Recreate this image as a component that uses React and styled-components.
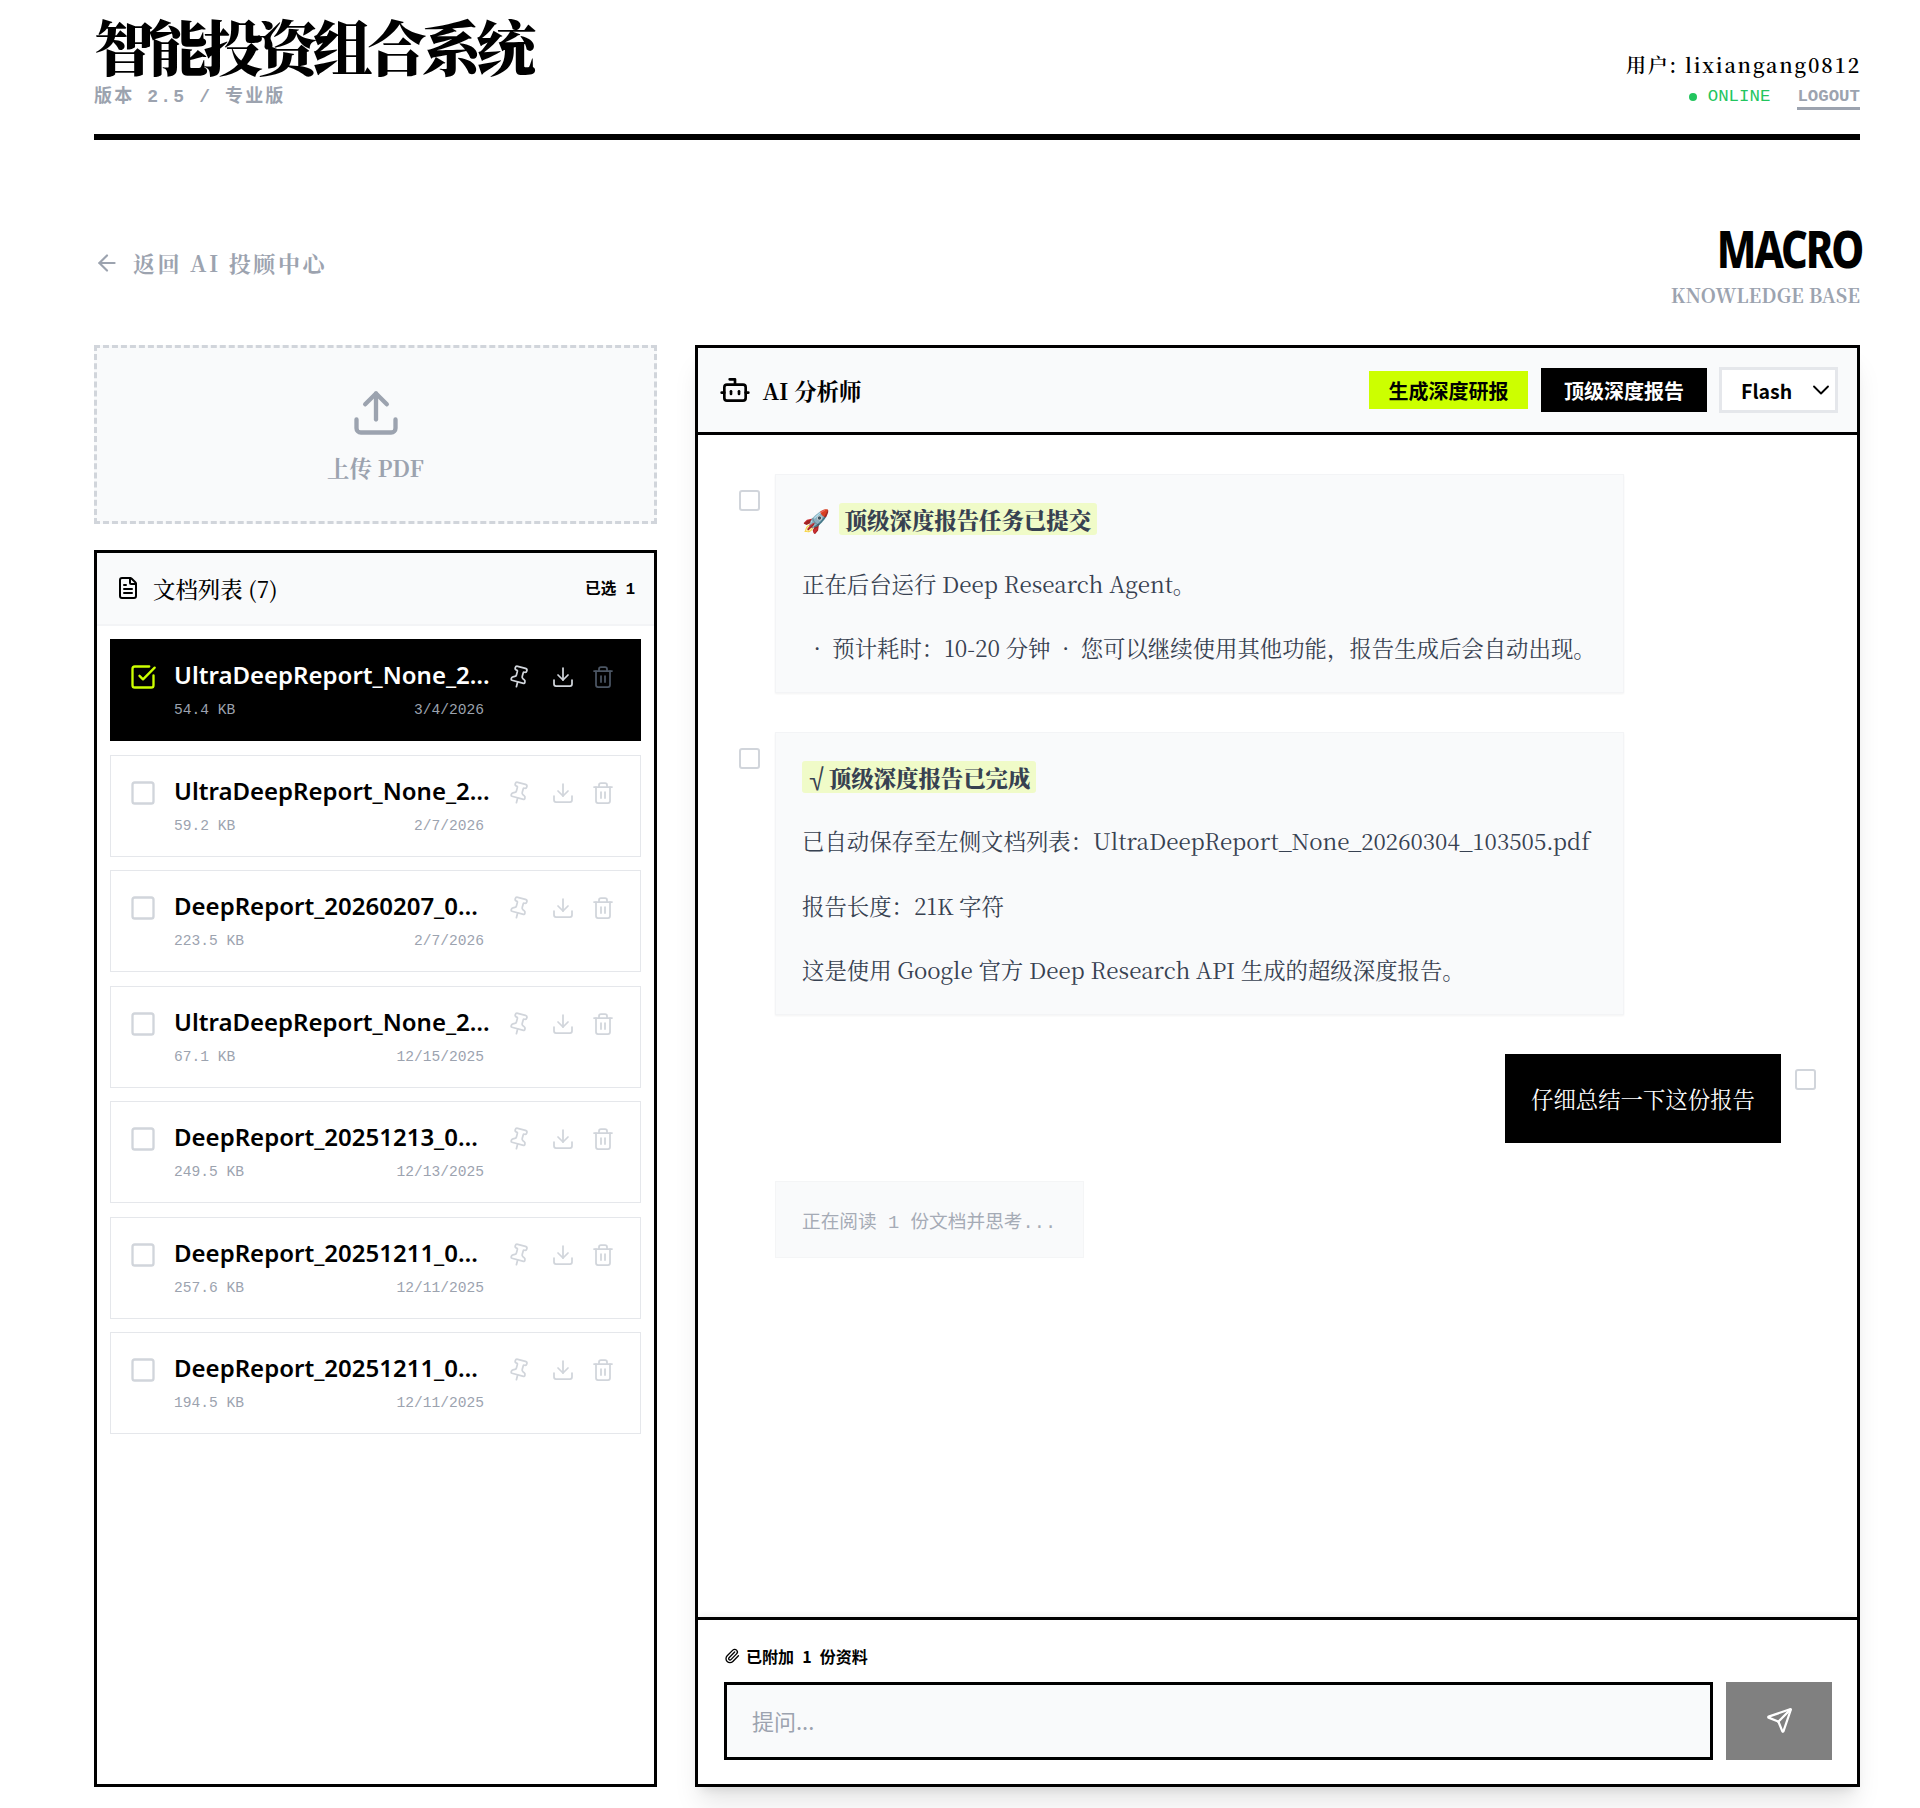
import React from 'react';
import styled, { createGlobalStyle } from 'styled-components';
import {
  ArrowLeft,
  Bot,
  ChevronDown,
  Download,
  FileText,
  Paperclip,
  Pin,
  Send,
  SquareCheckBig,
  Square,
  Trash2,
  Upload
} from 'lucide-react';

const SERIF = '"Noto Serif CJK SC", "Noto Serif SC", "Liberation Serif", "Noto Sans CJK SC", serif';
const SANS = '"Noto Sans CJK SC", "Noto Sans", sans-serif';
const LATIN = '"Noto Sans", "Noto Sans CJK SC", sans-serif';
const MONO = '"Liberation Mono", "Noto Sans CJK SC", monospace';

const GlobalStyle = createGlobalStyle`
  html, body {
    margin: 0;
    background: #fff;
  }
  * {
    box-sizing: border-box;
  }
`;

const Page = styled.div`
  width: 1920px;
  height: 1808px;
  padding: 0 60px 0 94px;
  overflow: hidden;
  font-family: ${SANS};
`;

const TopBar = styled.header`
  height: 140px;
  padding-top: 12px;
  display: flex;
  justify-content: space-between;
  border-bottom: 6px solid #000;
`;

const Title = styled.h1`
  margin: 0;
  font-family: ${SERIF};
  font-size: 60px;
  font-weight: 900;
  line-height: 66px;
  letter-spacing: -0.09em;
  color: #000;
`;

const Version = styled.div`
  margin-top: 7px;
  font-family: ${MONO};
  font-size: 18px;
  font-weight: 700;
  line-height: 24px;
  letter-spacing: 0.12em;
  color: #9ca3af;
`;

const UserBlock = styled.div`
  padding-top: 38px;
  display: flex;
  flex-direction: column;
  align-items: flex-end;
  gap: 7px;
`;

const UserName = styled.div`
  font-family: ${SERIF};
  font-size: 20px;
  font-weight: 600;
  line-height: 30px;
  letter-spacing: 0.09em;
  color: #000;
  margin-right: -1px;
`;

const StatusRow = styled.div`
  display: flex;
  align-items: flex-start;
  gap: 27px;
  font-family: ${MONO};
  font-size: 17.4px;
  line-height: 20px;
`;

const Online = styled.span`
  display: flex;
  align-items: center;
  gap: 11px;
  color: #22c55e;

  &::before {
    content: '';
    width: 8px;
    height: 8px;
    border-radius: 50%;
    background: #22c55e;
  }
`;

const Logout = styled.a`
  font-weight: 700;
  color: #9ca3af;
  border-bottom: 3px solid #9ca3af;
`;

const SubBar = styled.div`
  height: 205px;
  display: flex;
  justify-content: space-between;
  align-items: flex-start;
`;

const BackLink = styled.a`
  margin-top: 105px;
  display: flex;
  align-items: center;
  gap: 13px;
  font-family: ${SERIF};
  font-size: 22px;
  font-weight: 700;
  line-height: 36px;
  letter-spacing: 0.115em;
  color: #9ca3af;
`;

const KbTitle = styled.div`
  margin-top: 80px;
  text-align: right;
`;

const Macro = styled.div`
  font-family: "Noto Sans", sans-serif;
  font-size: 52px;
  font-weight: 800;
  line-height: 56px;
  letter-spacing: -0.05em;
  color: #000;
  margin: 0 -2px 4px 0;
  transform: scaleX(0.8);
  transform-origin: right center;
`;

const KbSub = styled.div`
  font-family: ${SERIF};
  font-size: 19.2px;
  font-weight: 700;
  line-height: 30px;
  color: #9ca3af;
`;

const Columns = styled.div`
  display: grid;
  grid-template-columns: 563px 1165px;
  gap: 38px;
  height: 1442px;
`;

const LeftColumn = styled.div`
  display: flex;
  flex-direction: column;
  gap: 26px;
  min-width: 0;
`;

const UploadBox = styled.div`
  height: 179px;
  flex: none;
  padding-top: 2px;
  display: flex;
  flex-direction: column;
  align-items: center;
  justify-content: center;
  gap: 11px;
  background: #f9fafb;
  border: 3px dashed #d1d5db;
  color: #9ca3af;
`;

const UploadText = styled.div`
  font-family: ${SERIF};
  font-size: 22.4px;
  font-weight: 700;
  line-height: 34px;
`;

const DocPanel = styled.section`
  flex: 1;
  min-height: 0;
  display: flex;
  flex-direction: column;
  border: 3px solid #000;
`;

const DocHeader = styled.div`
  height: 73px;
  flex: none;
  padding: 0 19px 0 19px;
  display: flex;
  align-items: center;
  justify-content: space-between;
  background: #f9fafb;
  border-bottom: 2px solid #f3f4f6;
`;

const DocHeading = styled.div`
  display: flex;
  align-items: center;
  gap: 13px;
  margin-bottom: 2px;
  font-family: ${SERIF};
  font-size: 22.4px;
  font-weight: 500;
  color: #000;
`;

const Selected = styled.div`
  margin-bottom: 3px;
  font-family: ${MONO};
  font-size: 15.6px;
  font-weight: 700;
  color: #000;
`;

const DocList = styled.div`
  padding: 13px;
  display: flex;
  flex-direction: column;
  gap: 13.5px;
`;

const DocItem = styled.div`
  height: 102px;
  padding: 19px 25px 0 18px;
  display: flex;
  align-items: flex-start;
  background: ${(p) => (p.$active ? '#000' : '#fff')};
  border: 1px solid ${(p) => (p.$active ? '#000' : '#e5e7eb')};
  color: ${(p) => (p.$active ? '#fff' : '#000')};
`;

const CheckSlot = styled.div`
  flex: none;
  width: 45px;
  padding-top: 4px;
  color: ${(p) => (p.$active ? '#ccff00' : '#d1d5db')};
`;

const DocBody = styled.div`
  width: 310px;
  flex: none;
`;

const DocName = styled.div`
  margin: -2px -7px 0 0;
  font-family: ${LATIN};
  font-size: 24px;
  font-weight: 600;
  line-height: 36px;
  overflow: hidden;
  white-space: nowrap;
  text-overflow: ellipsis;
`;

const DocMeta = styled.div`
  margin-top: 7px;
  display: flex;
  justify-content: space-between;
  font-family: ${MONO};
  font-size: 14.6px;
  line-height: 20px;
  color: #9ca3af;
`;

const DocActions = styled.div`
  margin-left: auto;
  padding-top: 6px;
  display: flex;
  gap: 16.5px;
  color: #d1d5db;

  svg:last-child {
    color: ${(p) => (p.$active ? '#4b5563' : '#d1d5db')};
  }
`;

const PinIcon = styled(Pin)`
  margin: 0 3.5px 0 -1px;
  transform: rotate(15deg);
`;

const ChatPanel = styled.section`
  display: flex;
  flex-direction: column;
  min-width: 0;
  border: 3px solid #000;
  box-shadow: 0 20px 25px -5px rgba(0, 0, 0, 0.1), 0 8px 10px -6px rgba(0, 0, 0, 0.1);
`;

const ChatHeader = styled.div`
  height: 87px;
  flex: none;
  padding: 0 19px 0 21px;
  display: flex;
  align-items: center;
  background: #f9fafb;
  border-bottom: 3px solid #000;
`;

const ChatTitle = styled.div`
  display: flex;
  align-items: center;
  gap: 11.5px;
  margin-right: auto;
  font-family: ${SERIF};
  font-size: 22.4px;
  font-weight: 700;
  color: #000;
`;

const HeaderButton = styled.button`
  height: ${(p) => (p.$dark ? '44px' : '38px')};
  padding: 0 ${(p) => (p.$dark ? '23px' : '19.5px')};
  margin-right: ${(p) => (p.$dark ? '12px' : '13px')};
  border: none;
  background: ${(p) => (p.$dark ? '#000' : '#ccff00')};
  color: ${(p) => (p.$dark ? '#fff' : '#000')};
  font-family: ${SANS};
  font-size: 20px;
  font-weight: 700;
`;

const ModelSelect = styled.div`
  width: 119px;
  height: 46px;
  padding: 0 0 0 19px;
  display: flex;
  align-items: center;
  justify-content: space-between;
  background: #fff;
  border: 3px solid #e5e7eb;
  font-size: 19.5px;
  font-weight: 600;
  color: #000;
`;

const Messages = styled.div`
  flex: 1;
  min-height: 0;
  padding: 39px 41px 0 41px;
  display: flex;
  flex-direction: column;
  gap: 38.4px;
`;

const MessageRow = styled.div`
  display: flex;
  gap: ${(p) => (p.$user ? '14px' : '15px')};
  justify-content: ${(p) => (p.$user ? 'flex-end' : 'flex-start')};
  align-items: flex-start;
`;

const PickBox = styled.span`
  flex: none;
  width: 21px;
  height: 21px;
  margin-top: ${(p) => (p.$user ? '15px' : '16px')};
  background: #fff;
  border: 2px solid #d1d5db;
  border-radius: 3px;
`;

const Bubble = styled.div`
  width: 849px;
  padding: 26px;
  background: #f9fafb;
  border: 1px solid #f3f4f6;
  box-shadow: 0 1px 2px rgba(0, 0, 0, 0.05);
  font-family: ${SERIF};
  font-size: 22.4px;
  line-height: 35.84px;
  color: #374151;
`;

const Para = styled.p`
  margin: 28.8px 0 0;
  white-space: pre-wrap;

  &:first-child {
    margin-top: 0;
    padding-top: 1px;
  }

  &:first-child + & {
    margin-top: 27.8px;
  }
`;

const Highlight = styled.mark`
  padding: 0 6px;
  border-radius: 3px;
  background: rgba(204, 255, 0, 0.2);
  color: #374151;
  font-weight: 900;
`;

const Emoji = styled.span`
  margin-right: 3px;
`;

const RootMark = styled.span`
  margin: 0 1px 0 -2.5px;
`;

const UserBubble = styled.div`
  width: 276px;
  height: 89px;
  padding-bottom: 1px;
  display: flex;
  align-items: center;
  justify-content: center;
  background: #000;
  color: #fff;
  font-family: ${SERIF};
  font-size: 22.4px;
`;

const ThinkingBubble = styled.div`
  margin-left: 36px;
  width: 309px;
  height: 77px;
  display: flex;
  align-items: center;
  padding-left: 26px;
  background: #f9fafb;
  border: 1px solid #f3f4f6;
  font-family: ${MONO};
  font-size: 18.7px;
  color: #9ca3af;
  opacity: 0.9;
`;

const Composer = styled.div`
  height: 167px;
  flex: none;
  padding: 18px 25px 0 26px;
  border-top: 3px solid #000;
  box-shadow: 0 -4px 6px -1px rgba(0, 0, 0, 0.05);
`;

const Attached = styled.div`
  height: 36px;
  display: flex;
  align-items: center;
  gap: 6px;
  font-family: ${SANS};
  font-size: 16px;
  font-weight: 700;
  word-spacing: 4.5px;
  color: #000;
`;

const InputRow = styled.div`
  margin-top: 8px;
  display: flex;
  gap: 13px;
`;

const AskInput = styled.input`
  flex: 1;
  height: 78px;
  padding: 0 25px 2px;
  background: #f9fafb;
  border: 3px solid #000;
  border-radius: 0;
  outline: none;
  font-family: ${SANS};
  font-size: 22px;

  &::placeholder {
    color: #9ca3af;
  }
`;

const SendButton = styled.button`
  width: 106px;
  height: 78px;
  padding-bottom: 2px;
  display: flex;
  align-items: center;
  justify-content: center;
  border: none;
  background: #808080;
  color: #fff;
`;

const documents = [
  { name: 'UltraDeepReport_None_20260304_103505.pdf', size: '54.4 KB', date: '3/4/2026', active: true },
  { name: 'UltraDeepReport_None_20260207_091122.pdf', size: '59.2 KB', date: '2/7/2026' },
  { name: 'DeepReport_20260207_084510.pdf', size: '223.5 KB', date: '2/7/2026' },
  { name: 'UltraDeepReport_None_20251215_160233.pdf', size: '67.1 KB', date: '12/15/2025' },
  { name: 'DeepReport_20251213_093041.pdf', size: '249.5 KB', date: '12/13/2025' },
  { name: 'DeepReport_20251211_075512.pdf', size: '257.6 KB', date: '12/11/2025' },
  { name: 'DeepReport_20251211_002238.pdf', size: '194.5 KB', date: '12/11/2025' }
];

const App = () => {
  return (
    <Page>
      <GlobalStyle />

      {/* Top header */}
      <TopBar>
        <div>
          <Title>智能投资组合系统</Title>
          <Version>版本 2.5 / 专业版</Version>
        </div>
        <UserBlock>
          <UserName>用户: lixiangang0812</UserName>
          <StatusRow>
            <Online>ONLINE</Online>
            <Logout>LOGOUT</Logout>
          </StatusRow>
        </UserBlock>
      </TopBar>

      <SubBar>
        <BackLink>
          <ArrowLeft size={26} />
          返回 AI 投顾中心
        </BackLink>
        <KbTitle>
          <Macro>MACRO</Macro>
          <KbSub>KNOWLEDGE BASE</KbSub>
        </KbTitle>
      </SubBar>

      <Columns>
        <LeftColumn>
          <UploadBox>
            <Upload size={52} />
            <UploadText>上传 PDF</UploadText>
          </UploadBox>

          <DocPanel>
            <DocHeader>
              <DocHeading>
                <FileText size={24} />
                文档列表 (7)
              </DocHeading>
              <Selected>已选 1</Selected>
            </DocHeader>
            <DocList>
              {documents.map((doc) => (
                <DocItem key={doc.name} $active={doc.active}>
                  <CheckSlot $active={doc.active}>
                    {doc.active ? <SquareCheckBig size={28} /> : <Square size={28} />}
                  </CheckSlot>
                  <DocBody>
                    <DocName>{doc.name}</DocName>
                    <DocMeta>
                      <span>{doc.size}</span>
                      <span>{doc.date}</span>
                    </DocMeta>
                  </DocBody>
                  <DocActions $active={doc.active}>
                    <PinIcon size={24} strokeWidth={1.75} />
                    <Download size={24} strokeWidth={1.75} />
                    <Trash2 size={24} strokeWidth={1.75} />
                  </DocActions>
                </DocItem>
              ))}
            </DocList>
          </DocPanel>
        </LeftColumn>

        <ChatPanel>
          <ChatHeader>
            <ChatTitle>
              <Bot size={32} />
              AI 分析师
            </ChatTitle>
            <HeaderButton>生成深度研报</HeaderButton>
            <HeaderButton $dark>顶级深度报告</HeaderButton>
            <ModelSelect>
              Flash
              <ChevronDown size={28} strokeWidth={1.6} />
            </ModelSelect>
          </ChatHeader>

          <Messages>
            <MessageRow>
              <PickBox />
              <Bubble>
                <Para>
                  <Emoji>🚀</Emoji> <Highlight>顶级深度报告任务已提交</Highlight>
                </Para>
                <Para>正在后台运行 Deep Research Agent。</Para>
                <Para>
                  {'  ·  预计耗时\uFF1A10-20 分钟  ·  您可以继续使用其他功能\uFF0C报告生成后会自动出现。'}
                </Para>
              </Bubble>
            </MessageRow>

            <MessageRow>
              <PickBox />
              <Bubble>
                <Para>
                  <Highlight>
                    <RootMark>√</RootMark>顶级深度报告已完成
                  </Highlight>
                </Para>
                <Para>{'已自动保存至左侧文档列表\uFF1AUltraDeepReport_None_20260304_103505.pdf'}</Para>
                <Para>{'报告长度\uFF1A21K 字符'}</Para>
                <Para>这是使用 Google 官方 Deep Research API 生成的超级深度报告。</Para>
              </Bubble>
            </MessageRow>

            <MessageRow $user>
              <UserBubble>仔细总结一下这份报告</UserBubble>
              <PickBox $user />
            </MessageRow>

            <ThinkingBubble>正在阅读 1 份文档并思考...</ThinkingBubble>
          </Messages>

          <Composer>
            <Attached>
              <Paperclip size={16} />
              已附加 1 份资料
            </Attached>
            <InputRow>
              <AskInput placeholder="提问..." />
              <SendButton>
                <Send size={27} />
              </SendButton>
            </InputRow>
          </Composer>
        </ChatPanel>
      </Columns>
    </Page>
  );
};

export default App;
